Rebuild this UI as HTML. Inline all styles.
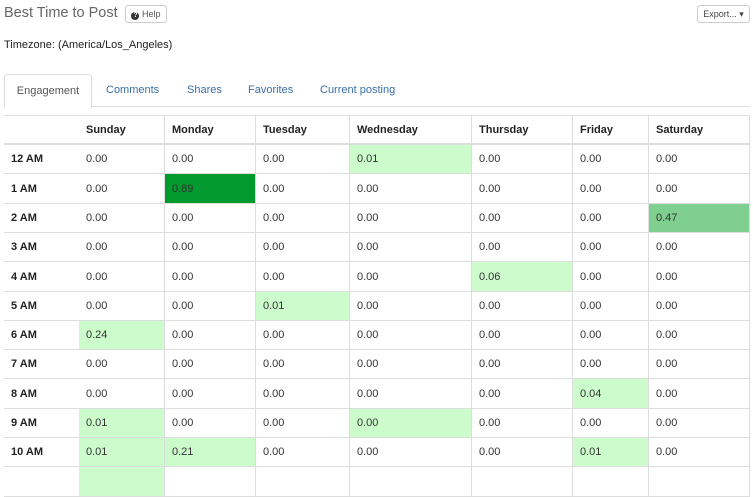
<!DOCTYPE html><html><head><style>
body{margin:0;width:753px;height:474px;overflow:hidden;background:#fff;font-family:"Liberation Sans",sans-serif;position:relative;color:#333}
.a{position:absolute}
.c{position:absolute;box-sizing:border-box;border-right:1px solid #ddd;border-bottom:1px solid #ddd;font-size:11px;padding-left:7px;display:flex;align-items:center}
.h{font-weight:bold;color:#222}
</style></head><body>
<div class="a" style="left:4px;top:5px;font-size:14.5px;color:#666;white-space:nowrap">Best Time to Post</div>
<div class="a" style="left:125px;top:5px;width:40px;height:16px;border:1px solid #ccc;border-radius:3px;font-size:9px;color:#555;line-height:16px;text-align:center"><span style="display:inline-block;width:8px;height:8px;border-radius:50%;background:#333;color:#fff;font-size:7px;line-height:8px;font-weight:bold">?</span> Help</div>
<div class="a" style="left:697px;top:5px;width:51px;height:16px;border:1px solid #ccc;border-radius:3px;font-size:9px;color:#444;line-height:16px;text-align:center">Export... ▾</div>
<div class="a" style="left:4px;top:39px;font-size:11px;color:#222">Timezone: (America/Los_Angeles)</div>
<div class="a" style="left:4px;top:106px;width:746px;height:1px;background:#ddd"></div>
<div class="a" style="left:4px;top:74px;width:86px;height:33px;border:1px solid #ddd;border-bottom:none;border-radius:3px 3px 0 0;background:#fff;font-size:11px;color:#555;text-align:center;line-height:33px">Engagement</div>
<div class="a" style="left:106px;top:84px;font-size:11px;color:#3a6fa8">Comments</div>
<div class="a" style="left:187px;top:84px;font-size:11px;color:#3a6fa8">Shares</div>
<div class="a" style="left:248px;top:84px;font-size:11px;color:#3a6fa8">Favorites</div>
<div class="a" style="left:320px;top:84px;font-size:11px;color:#3a6fa8">Current posting</div>
<div class="a" style="left:4px;top:115px;width:746px;height:1px;background:#ddd"></div>
<div class="a" style="left:4px;top:115px;width:1px;height:360px;background:#ddd"></div>
<div id="t"></div>
<script>
var xs=[4,79,165,256,350,472,573,649,750];
var hd=["","Sunday","Monday","Tuesday","Wednesday","Thursday","Friday","Saturday"];
var rows=["12 AM","1 AM","2 AM","3 AM","4 AM","5 AM","6 AM","7 AM","8 AM","9 AM","10 AM",""];
var hi={"0,4":"0.01","1,2":"0.89","2,7":"0.47","4,5":"0.06","5,3":"0.01","6,1":"0.24","8,6":"0.04","9,1":"0.01","9,4":"0.00","10,1":"0.01","10,2":"0.21","10,6":"0.01","11,1":""};
var s="";
function cell(x0,x1,y,h,txt,cls,bg,bb){s+='<div class="c '+cls+'" style="left:'+x0+'px;width:'+(x1-x0+(x0==4?1:0))+'px;top:'+y+'px;height:'+h+'px;background:'+bg+(bb?';border-bottom-width:2px':'')+'">'+txt+'</div>';}
for(var j=0;j<8;j++)cell(xs[j],xs[j+1],116,29,hd[j],"h","#fff",1);
for(var i=0;i<12;i++){var y=Math.round(145+i*29.3),y2=Math.round(145+(i+1)*29.3);
for(var j=0;j<8;j++){var k=i+","+j,bg="#fff",t=j==0?rows[i]:(i<11?"0.00":"");
if(hi[k]!==undefined){t=hi[k];bg=k=="1,2"?"#009a2e":k=="2,7"?"#7fcf90":"#ccfccc";}
cell(xs[j],xs[j+1],y,y2-y,t,j==0?"h":"",bg);}}
document.getElementById("t").innerHTML=s;
</script>
</body></html>
